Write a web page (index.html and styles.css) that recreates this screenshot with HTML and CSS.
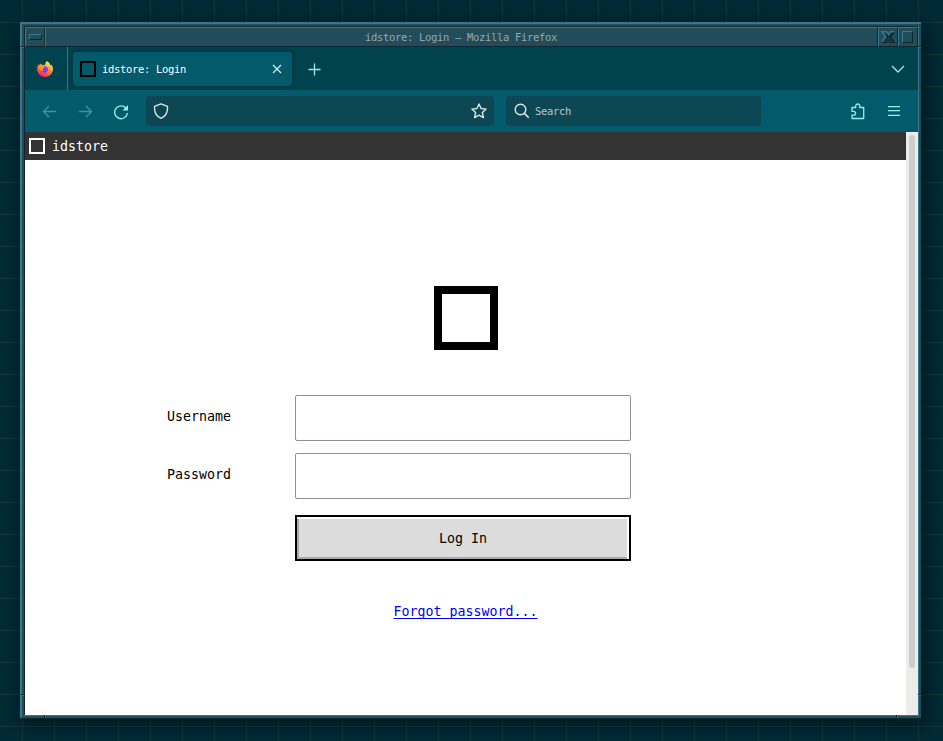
FILE: index.html
```html
<!DOCTYPE html>
<html lang="en">
<head>
<meta charset="utf-8">
<title>idstore: Login</title>
<link rel="stylesheet" href="styles.css">
</head>
<body>
<div class="window">
  <span class="notch v n1"></span><span class="notch v n2"></span><span class="notch v n3"></span><span class="notch v n4"></span>
  <span class="notch h n5"></span><span class="notch h n6"></span>
  <div class="titlebar">
    <div class="wm-cell"><span class="wm-menu"></span></div>
    <div class="wm-title">idstore: Login – Mozilla Firefox</div>
    <div class="wm-cell"><svg width="16" height="12" viewBox="0 0 16 12" fill="none"><path d="M1.500 11.500h5l2-3 2 3h4l-4-5.500 4-5.500" stroke="#10272f" stroke-width="1.300"/><path d="M1.500 11l4-5-4-5.500h5l2 3 2-3h4" stroke="#37788c" stroke-width="1.300"/><path d="M6 3l2 3-3 4M12 2.500L9.500 6l3 4" stroke="#10272f" stroke-width="1.300"/></svg></div>
    <div class="wm-cell"><span class="wm-max"></span></div>
  </div>
  <div class="tabs">
    <div class="view"><svg width="18" height="18" viewBox="0 0 18 18"><defs><linearGradient id="fx" x1=".8" y1="0" x2=".3" y2="1"><stop offset="0" stop-color="#fff44f"/><stop offset=".4" stop-color="#ffa036"/><stop offset=".75" stop-color="#ff4b4b"/><stop offset="1" stop-color="#e31587"/></linearGradient></defs><path d="M11 1c2 1 3 3 3.500 4.500l.8-1C17 7 17.500 9 16.600 11.500A8 8 0 0 1 1 9.500C1 7 1.800 5.500 3 4l.3 1.200L5 3.500l.6 1.300L9 5c0-2 1-3 2-4z" fill="url(#fx)"/><path d="M5.500 7.500c2-2 6.500-1.500 6.500 2A3.500 3.500 0 0 1 5.500 11l2-.7z" fill="#7542e5"/><path d="M3.500 5.500L7 6l2 1.500-2.500 1.200.3 2C4 10.500 3 8 3.500 5.500z" fill="#ff980e"/></svg></div>
    <div class="tab"><span class="favicon"></span><span class="tab-name">idstore: Login</span><svg width="10" height="10" viewBox="0 0 10 10"><path d="M1 1l8 8M9 1L1 9" stroke="#d8f0f2" stroke-width="1.200"/></svg></div>
    <svg class="plus" width="13" height="13" viewBox="0 0 13 13"><path d="M6.500 .5v12M.5 6.500h12" stroke="#9aeee8" stroke-width="1.300"/></svg>
    <svg class="chev" width="14" height="8" viewBox="0 0 14 8" fill="none"><path d="M1 1l6 6 6-6" stroke="#9aeee8" stroke-width="1.400"/></svg>
  </div>
  <div class="toolbar">
    <svg class="back" width="15" height="13" viewBox="0 0 15 13" fill="none"><path d="M14 6.500H1.500M7 1L1.500 6.500 7 12" stroke="#3f93a0" stroke-width="1.400"/></svg>
    <svg class="fwd" width="15" height="13" viewBox="0 0 15 13" fill="none"><path d="M1 6.500h12.500M8 1l5.500 5.500L8 12" stroke="#3f93a0" stroke-width="1.400"/></svg>
    <svg class="reload" width="16" height="16" viewBox="0 0 16 16" fill="none"><path d="M12.800 4A6.400 6.400 0 1 0 14.400 9" stroke="#9aeee8" stroke-width="1.400"/><path d="M15 1v5.500H9.500z" fill="#9aeee8"/></svg>
    <div class="url"><svg width="16" height="16" viewBox="0 0 16 16" fill="none"><path d="M8 .8l6.500 2.600c.3 5-1.500 9.800-6.500 11.900C3 13.200 1.200 8.400 1.500 3.400z" stroke="#d9e7e9" stroke-width="1.300" stroke-linejoin="round"/></svg><svg width="16" height="16" viewBox="0 0 16 16" fill="none"><path d="M8 1l2.100 4.500 5 .6-3.700 3.500 1 5L8 12.200l-4.400 2.400 1-5L.9 6.100l5-.6z" stroke="#d9e7e9" stroke-width="1.400" stroke-linejoin="round"/></svg></div>
    <div class="search"><svg width="16" height="16" viewBox="0 0 16 16" fill="none"><circle cx="6.500" cy="6.500" r="5.300" stroke="#d9e7e9" stroke-width="1.400"/><path d="M10.400 10.400l4.300 4.300" stroke="#d9e7e9" stroke-width="1.600"/></svg><span>Search</span></div>
    <svg class="puzzle" width="16" height="17" viewBox="0 0 16 17" fill="none"><path d="M2 4.500h3.700V3a2 2 0 0 1 4 0v1.500h4v11H2v-3.300h1.700a1.900 1.900 0 0 0 0-3.800H2z" stroke="#9aeee8" stroke-width="1.300" stroke-linejoin="round"/></svg>
    <svg class="burger" width="12" height="10" viewBox="0 0 12 10"><path d="M0 .6h12M0 4.600h12M0 9.400h12" stroke="#9aeee8" stroke-width="1.200"/></svg>
  </div>
  <div class="viewport">
    <div class="page">
      <header class="site"><span class="mark"></span>idstore</header>
      <div class="logo"></div>
      <form class="login">
        <label for="u">Username</label><input id="u" type="text">
        <label for="p">Password</label><input id="p" type="password">
        <button type="button">Log In</button>
      </form>
      <a class="forgot" href="#">Forgot password...</a>
    </div>
    <div class="scroll"><div class="thumb"></div></div>
  </div>
</div>
</body>
</html>
```
FILE: styles.css
```css
* { box-sizing: border-box; }
body {
  margin: 0;
  height: 741px;
  overflow: hidden;
  padding: 22px 0 0 20px;
  background:
    repeating-linear-gradient(90deg, transparent 0 22px, #1c333b 22px 23px, transparent 23px 32px),
    repeating-linear-gradient(180deg, transparent 0 22px, #1c333b 22px 23px, transparent 23px 32px),
    #002b36;
  font-family: "DejaVu Sans Mono", monospace;
}
svg { display: block; flex: none; }
.window {
  position: relative;
  width: 901px;
  height: 696px;
  display: flex;
  flex-direction: column;
  border: solid #234c5a;
  border-width: 4px 3px 3px 4px;
  padding: 1px 0 0 1px;
  background: #10272f;
  box-shadow: 0 1px #10272f, 3px 5px 16px 3px rgba(0, 0, 0, .42);
}
.window::before {
  content: "";
  position: absolute;
  inset: -4px -3px -3px -4px;
  border-top: 2px solid #37788c;
  border-left: 2px solid #37788c;
  pointer-events: none;
}
.window::after {
  content: "";
  position: absolute;
  inset: 0 -1px -1px 0;
  border: solid #37788c;
  border-width: 0 1px 1px 0;
  pointer-events: none;
}
.notch { position: absolute; z-index: 2; }
.v { width: 3px; height: 2px; background: linear-gradient(#10272f 50%, #37788c 50%); }
.h { width: 2px; height: 3px; background: linear-gradient(90deg, #10272f 50%, #37788c 50%); }
.n1 { left: -3px; top: 20px; }
.n2 { left: -3px; top: 668px; }
.n3 { right: -3px; top: 20px; }
.n4 { right: -3px; top: 668px; }
.n5 { left: 20px; bottom: -3px; }
.n6 { right: 20px; bottom: -3px; }
.titlebar {
  display: grid;
  grid-template-columns: 20px 1fr 20px 20px;
  height: 20px;
  width: 893px;
  flex: none;
}
.wm-cell, .wm-title {
  display: flex;
  align-items: center;
  justify-content: center;
  background: #234c5a;
  border: 1px solid;
  border-color: #37788c #10272f #10272f #37788c;
}
.wm-title {
  padding-right: 1px;
  color: #93a9b0;
  font-size: 10.5px;
  letter-spacing: -.32px;
  line-height: 18px;
}
.wm-menu, .wm-max {
  width: 13px;
  height: 6px;
  border: 1px solid;
  border-color: #37788c #10272f #10272f #37788c;
}
.wm-max { width: 11px; height: 12px; margin-right: 1px; }
.tabs {
  display: flex;
  align-items: center;
  width: 893px;
  height: 43px;
  flex: none;
  background: #00434f;
}
.view {
  width: 43px;
  height: 43px;
  padding: 13px 0 0 11px;
  border-right: 1px solid #397581;
}
.tab {
  display: flex;
  align-items: center;
  width: 219px;
  height: 34px;
  margin: 1px 0 0 5px;
  padding: 0 10px 0 7px;
  border-radius: 3px;
  background: #035a6b;
  box-shadow: 0 0 4px rgba(0, 0, 0, .4);
  color: #fff;
}
.favicon { width: 16px; height: 16px; border: 2px solid #000; }
.tab-name { flex: 1; margin-left: 6px; font-size: 10.5px; letter-spacing: -.32px; }
.plus { margin: 2px 0 0 16px; }
.chev { margin: 1px 13px 0 auto; }
.toolbar {
  display: flex;
  align-items: center;
  width: 893px;
  height: 42px;
  flex: none;
  background: #035a6b;
}
.back { margin: 1px 0 0 17px; }
.fwd { margin: 1px 0 0 21px; }
.reload { margin: 1px 0 0 20px; }
.url, .search {
  display: flex;
  align-items: center;
  height: 30px;
  border-radius: 3px;
  background: #0e4754;
}
.url { width: 348px; margin-left: 17px; padding: 0 7px; justify-content: space-between; }
.search { width: 255px; margin-left: 12px; padding: 0 8px; gap: 5px; color: #b5c9cc; font-size: 10.5px; letter-spacing: -.32px; }
.puzzle { margin-left: 89px; }
.burger { margin-left: 22px; }
.viewport { display: flex; width: 893px; height: 583px; flex: none; }
.page {
  display: flex;
  flex-direction: column;
  align-items: center;
  width: 881px;
  background: #fff;
  font-size: 13.3px;
  color: #000;
}
.site {
  display: flex;
  align-items: center;
  align-self: stretch;
  height: 28px;
  padding-left: 4px;
  gap: 7px;
  background: #333;
  color: #fff;
}
.mark { width: 16px; height: 16px; border: 2px solid #fff; }
.logo { width: 64px; height: 64px; margin-top: 126px; border: 8px solid #000; }
.login {
  display: grid;
  grid-template-columns: 128px 336px;
  grid-template-rows: 46px 46px 46px;
  row-gap: 12px;
  align-self: flex-start;
  margin: 45px 0 0 142px;
}
label { padding-top: 14px; line-height: 16px; }
input { width: 336px; height: 46px; border: 1px solid #8f8f9d; border-radius: 2px; background: #fff; }
button {
  grid-column: 2;
  height: 46px;
  margin-top: 4px;
  border: 2px solid #000;
  border-radius: 0;
  background: #dcdcdc;
  box-shadow: inset 0 2px #fff, inset -2px 0 #fff, inset 2px -2px #aaa;
  font: inherit;
  color: #000;
}
.forgot { margin-top: 47px; line-height: 16px; color: #00e; text-underline-offset: 2px; text-decoration-thickness: 1px; text-decoration-skip-ink: none; }
.scroll { width: 12px; padding: 3px; background: #edecea; }
.thumb { height: 533px; border-radius: 3px; background: #cdcdcd; }
```
